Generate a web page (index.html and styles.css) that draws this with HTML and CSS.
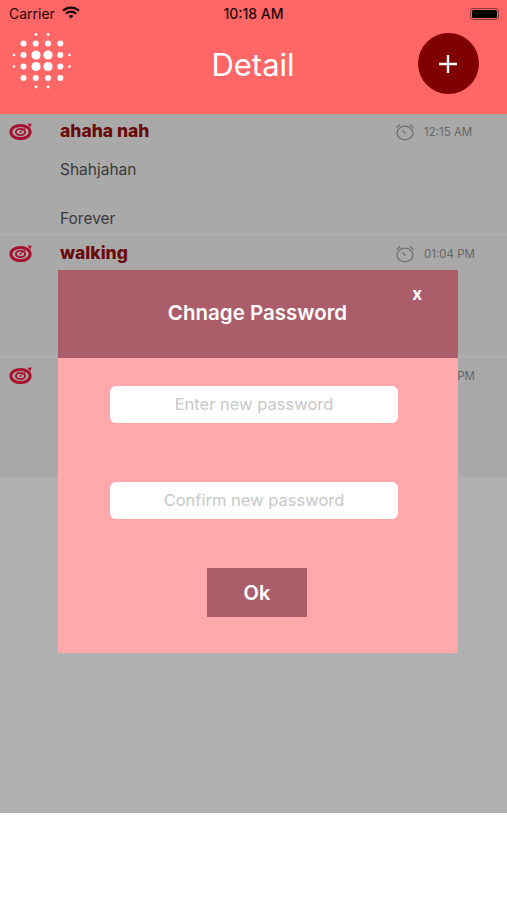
FILE: index.html
```html
<!DOCTYPE html>
<html lang="en">
<head>
  <meta charset="UTF-8">
  <meta name="viewport" content="width=device-width, initial-scale=1.0">
  <title>Detail</title>
  <link rel="stylesheet" href="styles.css">
</head>
<body>
  <svg class="svg-defs" width="0" height="0">
    <symbol id="target" viewBox="0 0 24 17">
      <ellipse cx="11.5" cy="9" rx="9.6" ry="6.6" fill="none" stroke="currentColor" stroke-width="3"/>
      <ellipse cx="11.5" cy="9" rx="4.6" ry="3.1" fill="none" stroke="currentColor" stroke-width="1.9"/>
      <circle cx="11.5" cy="9" r="1" fill="currentColor"/>
      <path d="M12 8.5 19 3" stroke="currentColor" stroke-width="1"/>
      <path d="M18.5 .8 22.6 .6 21.5 4.4Z" fill="currentColor"/>
    </symbol>
    <symbol id="clock" viewBox="0 0 20 18">
      <ellipse cx="10" cy="10" rx="8" ry="6.8" fill="none" stroke="currentColor" stroke-width="1.2"/>
      <path d="M7.5 7.5 10.5 10.5" stroke="currentColor" stroke-width="1.3"/>
      <path d="M1.5 4.5 5 1.5M18.5 4.5 15 1.5" stroke="currentColor" stroke-width="1.4"/>
    </symbol>
  </svg>

  <div class="app">
    <div class="top">
      <div class="status-bar">
        <div class="status-left">
          <span>Carrier</span>
          <svg class="wifi" width="18" height="13" viewBox="0 0 18 13">
            <path d="M1 4.8C5.5.6 12.5.6 17 4.8" fill="none" stroke="#1c0808" stroke-width="2.1"/>
            <path d="M3.9 7.6C6.8 5 11.2 5 14.1 7.6" fill="none" stroke="#1c0808" stroke-width="2.1"/>
            <path d="M6.6 10 9 12.6 11.4 10C10 8.8 8 8.8 6.6 10Z" fill="#1c0808"/>
          </svg>
        </div>
        <span class="status-time">10:18 AM</span>
        <div class="battery"><div class="battery-level"></div></div>
      </div>
      <div class="nav-bar">
        <svg class="logo" width="60" height="60" viewBox="12 32 60 60" fill="#fff">
          <circle cx="36" cy="34.5" r="1.4"/><circle cx="48" cy="34.5" r="1.4"/>
          <circle cx="23.5" cy="43.5" r="3"/><circle cx="35.7" cy="43.5" r="3"/><circle cx="48" cy="43.5" r="3"/><circle cx="60.3" cy="43.5" r="3"/>
          <circle cx="14" cy="55" r="1.3"/><circle cx="23.5" cy="55" r="3"/><circle cx="36" cy="55" r="4.6"/><circle cx="48" cy="55" r="4.6"/><circle cx="60.3" cy="55" r="3"/><circle cx="69.5" cy="55" r="1.3"/>
          <circle cx="14" cy="66.5" r="1.3"/><circle cx="23.5" cy="66.5" r="3"/><circle cx="36" cy="66.5" r="4.6"/><circle cx="48" cy="66.5" r="4.6"/><circle cx="60.3" cy="66.5" r="3"/><circle cx="69.5" cy="66.5" r="1.3"/>
          <circle cx="23.5" cy="78" r="3"/><circle cx="35.7" cy="78" r="3"/><circle cx="48" cy="78" r="3"/><circle cx="60.3" cy="78" r="3"/>
          <circle cx="36" cy="87" r="1.4"/><circle cx="48" cy="87" r="1.4"/>
        </svg>
        <h1 class="nav-title">Detail</h1>
        <button class="add-btn">
          <svg width="20" height="20" viewBox="0 0 20 20">
            <path d="M10 1V19M1 10H19" stroke="#fff" stroke-width="2.4"/>
          </svg>
        </button>
      </div>
    </div>

    <div class="list">
      <div class="row">
        <svg class="row-icon"><use href="#target"/></svg>
        <div class="row-body">
          <div class="row-head">
            <span class="row-title">ahaha nah</span>
            <span class="row-time"><svg class="clock-icon"><use href="#clock"/></svg><span class="time-text">12:15 AM</span></span>
          </div>
          <p class="row-text">Shahjahan</p>
          <p class="row-text row-repeat">Forever</p>
        </div>
      </div>
      <div class="row">
        <svg class="row-icon"><use href="#target"/></svg>
        <div class="row-body">
          <div class="row-head">
            <span class="row-title">walking</span>
            <span class="row-time"><svg class="clock-icon"><use href="#clock"/></svg><span class="time-text">01:04 PM</span></span>
          </div>
        </div>
      </div>
      <div class="row">
        <svg class="row-icon"><use href="#target"/></svg>
        <div class="row-body">
          <div class="row-head">
            <span class="row-title"></span>
            <span class="row-time"><span class="time-text">01:04 PM</span></span>
          </div>
        </div>
      </div>
    </div>
  </div>

  <div class="modal">
    <div class="modal-head">
      <h2 class="modal-title">Chnage Password</h2>
      <span class="modal-close">x</span>
    </div>
    <div class="modal-body">
      <input class="modal-input" type="password" placeholder="Enter new password">
      <input class="modal-input" type="password" placeholder="Confirm new password">
      <button class="ok-btn">Ok</button>
    </div>
  </div>
</body>
</html>
```

FILE: styles.css
```css
html, body {
  margin: 0;
  height: 900px;
  overflow: hidden;
  background: #fff;
  font-family: Inter, "Open Sans", sans-serif;
}
.svg-defs {
  position: absolute;
}
.app {
  height: 813px;
  background: #b0b0b0;
  display: flex;
  flex-direction: column;
}
.top {
  height: 114px;
  background: #ff6666;
  flex-shrink: 0;
}
.status-bar {
  height: 27px;
  padding: 0 8px 0 9px;
  display: flex;
  align-items: center;
  justify-content: space-between;
  position: relative;
  font-size: 14px;
  color: #1c0808;
}
.status-left {
  display: flex;
  align-items: center;
  gap: 7px;
}
.wifi {
  margin-top: -3px;
}
.status-time {
  font-weight: 500;
  position: absolute;
  left: 0;
  right: 0;
  text-align: center;
}
.battery {
  width: 29px;
  height: 12px;
  border: 1px solid #8a3a3a;
  border-radius: 3px;
  padding: 1px;
  box-sizing: border-box;
}
.battery-level {
  height: 100%;
  background: #000;
  border-radius: 1.5px;
}
.nav-bar {
  height: 87px;
  padding: 0 28px 0 12px;
  display: flex;
  align-items: flex-start;
  justify-content: space-between;
}
.logo {
  margin-top: 5px;
}
.nav-title {
  margin: 20px 0 0 16px;
  font-size: 31px;
  line-height: 36px;
  font-weight: 400;
  color: #fff;
}
.add-btn {
  width: 61px;
  height: 61px;
  margin-top: 6px;
  border: none;
  border-radius: 50%;
  background: #800000;
  padding: 0;
  display: flex;
  align-items: center;
  justify-content: center;
}
.list {
  display: flex;
  flex-direction: column;
  gap: 3px;
}
.row {
  height: 119px;
  background: #a9a9a9;
  display: flex;
  padding-right: 6px;
}
.row-icon {
  width: 24px;
  height: 17px;
  margin: 9px 0 0 9px;
  flex-shrink: 0;
  color: #a8112f;
}
.row-body {
  margin-left: 27px;
  flex: 1;
}
.row-head {
  height: 34px;
  display: flex;
  align-items: center;
  justify-content: space-between;
}
.row-title {
  font-size: 17.5px;
  font-weight: 800;
  color: #6b0a0a;
  margin-top: -2px;
}
.row-time {
  display: flex;
  align-items: center;
  gap: 9px;
  margin-right: 17px;
  margin-top: 2px;
  font-size: 11.5px;
  color: #666;
}
.time-text {
  width: 60px;
  white-space: nowrap;
}
.clock-icon {
  width: 20px;
  height: 18px;
  color: #6e6e6e;
}
.row-text {
  margin: 0;
  padding-top: 4px;
  font-size: 15.5px;
  line-height: 36px;
  color: #3a3a3a;
}
.row-repeat {
  padding-top: 13px;
}
.modal {
  position: absolute;
  left: 58px;
  top: 270px;
  width: 400px;
  height: 383px;
  display: flex;
  flex-direction: column;
}
.modal-head {
  height: 88px;
  background: #ab5d6a;
  position: relative;
  display: flex;
  align-items: center;
  justify-content: center;
  padding-bottom: 4px;
  box-sizing: border-box;
}
.modal-title {
  margin: 0 0 0 -1px;
  font-size: 20.5px;
  font-weight: 600;
  color: #fff;
}
.modal-close {
  position: absolute;
  right: 36px;
  top: 14px;
  font-size: 17px;
  font-weight: 700;
  color: #fff;
}
.modal-body {
  flex: 1;
  background: #ffa9ab;
  display: flex;
  flex-direction: column;
  align-items: center;
  padding-top: 28px;
}
.modal-input {
  width: 288px;
  height: 37px;
  margin-left: -8px;
  margin-bottom: 59px;
  padding-bottom: 2px;
  box-sizing: border-box;
  border: none;
  border-radius: 6px;
  background: #fff;
  text-align: center;
  font-family: inherit;
  font-size: 16.5px;
}
.modal-input::placeholder {
  color: #c8c8c8;
  opacity: 1;
}
.ok-btn {
  width: 100px;
  height: 49px;
  margin-top: -10px;
  margin-right: 2px;
  border: none;
  background: #ab5d6a;
  color: #fff;
  font-family: inherit;
  font-size: 20px;
  font-weight: 600;
}
```
